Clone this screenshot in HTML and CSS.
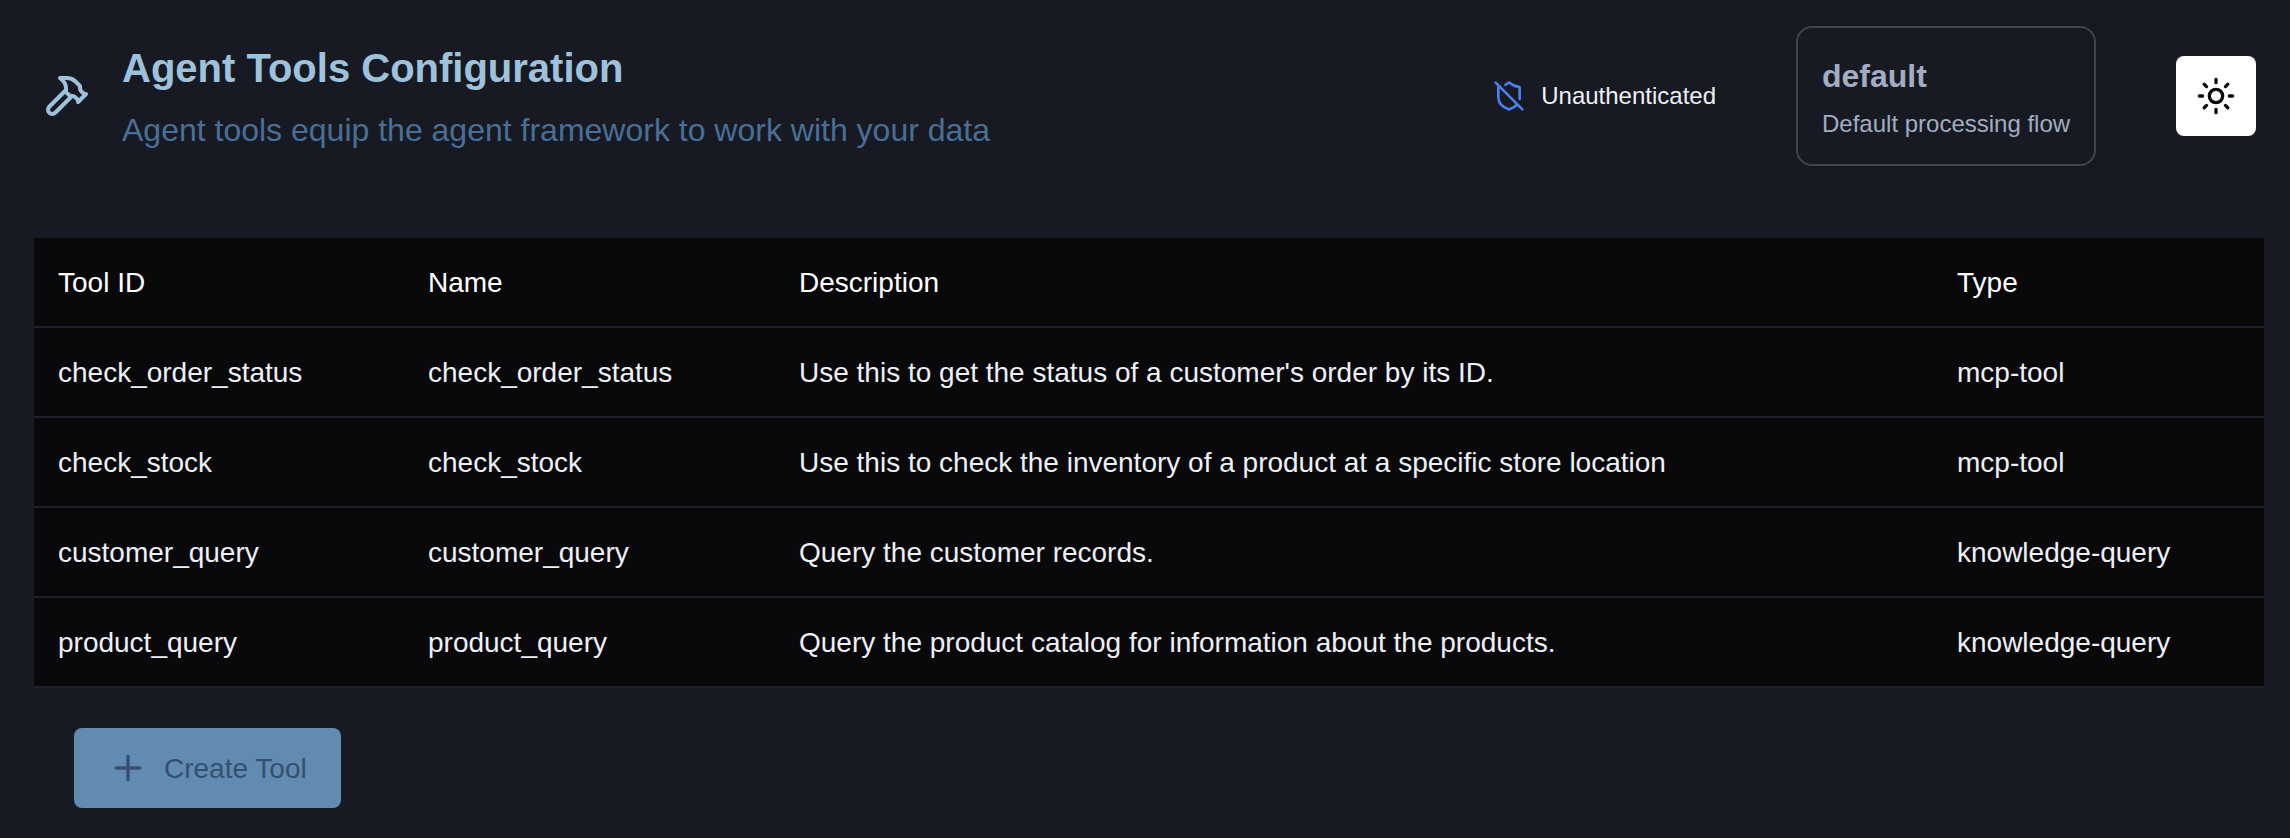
FILE: index.html
```html
<!DOCTYPE html>
<html lang="en">
<head>
<meta charset="utf-8">
<title>Agent Tools Configuration</title>
<link rel="stylesheet" href="styles.css">
</head>
<body>
<header class="header">
  <svg class="icon hammer" viewBox="0 0 24 24"><path d="m15 12-8.373 8.373a1 1 0 1 1-3-3L12 9"/><path d="m18 15 4-4"/><path d="m21.5 11.5-1.914-1.914A2 2 0 0 1 19 8.172V7l-2.26-2.26a6 6 0 0 0-4.202-1.756L9 2.96l.92.82A6.18 6.18 0 0 1 12 8.4V10l2 2h1.172a2 2 0 0 1 1.414.586L18.5 14.5"/></svg>
  <div class="titles">
    <h1 class="title">Agent Tools Configuration</h1>
    <p class="subtitle">Agent tools equip the agent framework to work with your data</p>
  </div>
  <div class="auth">
    <svg class="icon shield" viewBox="0 0 24 24"><path d="m2 2 20 20"/><path d="M5 5a1 1 0 0 0-1 1v7c0 5 3.5 7.5 7.67 8.94a1 1 0 0 0 .67.01c2.35-.82 4.48-1.97 5.9-3.71"/><path d="M9.309 3.652A12.252 12.252 0 0 0 11.24 2.28a1.17 1.17 0 0 1 1.52 0C14.51 3.81 17 5 19 5a1 1 0 0 1 1 1v7a9.784 9.784 0 0 1-.08 1.264"/></svg>
    <span>Unauthenticated</span>
  </div>
  <div class="flow">
    <div class="flow-name">default</div>
    <div class="flow-desc">Default processing flow</div>
  </div>
  <button class="theme" aria-label="Toggle theme">
    <svg class="icon sun" viewBox="0 0 24 24"><circle cx="12" cy="12" r="4"/><path d="M12 2v2M12 20v2M4.93 4.93l1.41 1.41M17.66 17.66l1.41 1.41M2 12h2M20 12h2M6.34 17.66l-1.41 1.41M19.07 4.93l-1.41 1.41"/></svg>
  </button>
</header>
<main>
  <table class="tools">
    <colgroup><col class="c-id"><col class="c-name"><col class="c-desc"><col class="c-type"></colgroup>
    <thead><tr><th>Tool ID</th><th>Name</th><th>Description</th><th>Type</th></tr></thead>
    <tbody>
      <tr><td>check_order_status</td><td>check_order_status</td><td>Use this to get the status of a customer's order by its ID.</td><td>mcp-tool</td></tr>
      <tr><td>check_stock</td><td>check_stock</td><td>Use this to check the inventory of a product at a specific store location</td><td>mcp-tool</td></tr>
      <tr><td>customer_query</td><td>customer_query</td><td>Query the customer records.</td><td>knowledge-query</td></tr>
      <tr><td>product_query</td><td>product_query</td><td>Query the product catalog for information about the products.</td><td>knowledge-query</td></tr>
    </tbody>
  </table>
  <button class="create">
    <svg class="icon plus" viewBox="0 0 24 24"><path d="M5 12h14M12 5v14"/></svg>
    <span class="create-label">Create Tool</span>
  </button>
</main>
</body>
</html>
```
FILE: styles.css
```css
* { box-sizing: border-box; }
body {
  margin: 0;
  height: 838px;
  overflow: hidden;
  background: #171a22;
  color: #edf0f5;
  font-family: "Liberation Sans", Arial, sans-serif;
  font-size: 28px;
}
.icon {
  display: block;
  flex: none;
  fill: none;
  stroke: currentColor;
  stroke-width: 2;
  stroke-linecap: round;
  stroke-linejoin: round;
}
.header {
  display: flex;
  align-items: center;
  height: 192px;
  padding: 0 34px 0 42px;
}
.hammer { width: 48px; height: 48px; color: #9fc2dc; }
.titles { margin-left: 32px; margin-right: auto; padding-top: 6px; }
.title {
  margin: 0;
  font-size: 40px;
  line-height: 56px;
  font-weight: 700;
  color: #9fc2dc;
}
.subtitle {
  margin: 6px 0 0;
  font-size: 32px;
  line-height: 56px;
  color: #4a6f96;
}
.auth {
  display: flex;
  align-items: center;
  gap: 16px;
  margin-right: 80px;
  font-size: 24px;
}
.shield { width: 32px; height: 32px; color: #4a80f0; }
.flow {
  width: 300px;
  height: 140px;
  margin-right: 80px;
  padding: 24px 0 0 24px;
  border: 2px solid #41444c;
  border-radius: 16px;
  color: #a1adc0;
  white-space: nowrap;
}
.flow-name { font-size: 32px; line-height: 48px; font-weight: 700; }
.flow-desc { font-size: 24px; line-height: 48px; }
.theme {
  display: grid;
  place-items: center;
  width: 80px;
  height: 80px;
  padding: 0;
  border: 0;
  border-radius: 8px;
  background: #fff;
  color: #09090b;
}
.sun { width: 40px; height: 40px; }
.tools {
  width: 2230px;
  margin: 46px 0 0 34px;
  border-collapse: separate;
  border-spacing: 0;
  table-layout: fixed;
  background: #09090b;
}
.c-id { width: 370px; }
.c-name { width: 371px; }
.c-desc { width: 1158px; }
.tools th, .tools td {
  height: 90px;
  padding: 2px 24px 0;
  border-bottom: 2px solid #1d212c;
  text-align: left;
  font-weight: 400;
  white-space: nowrap;
}
.tools th { color: #fff; }
.create {
  display: flex;
  align-items: center;
  gap: 16px;
  width: 267px;
  height: 80px;
  margin: 40px 0 0 74px;
  padding: 0 0 0 34px;
  border: 0;
  border-radius: 8px;
  background: #618bb1;
  color: #33506f;
  font: inherit;
  white-space: nowrap;
}
.create-label { padding-top: 2px; }
.plus { width: 40px; height: 40px; }
```
